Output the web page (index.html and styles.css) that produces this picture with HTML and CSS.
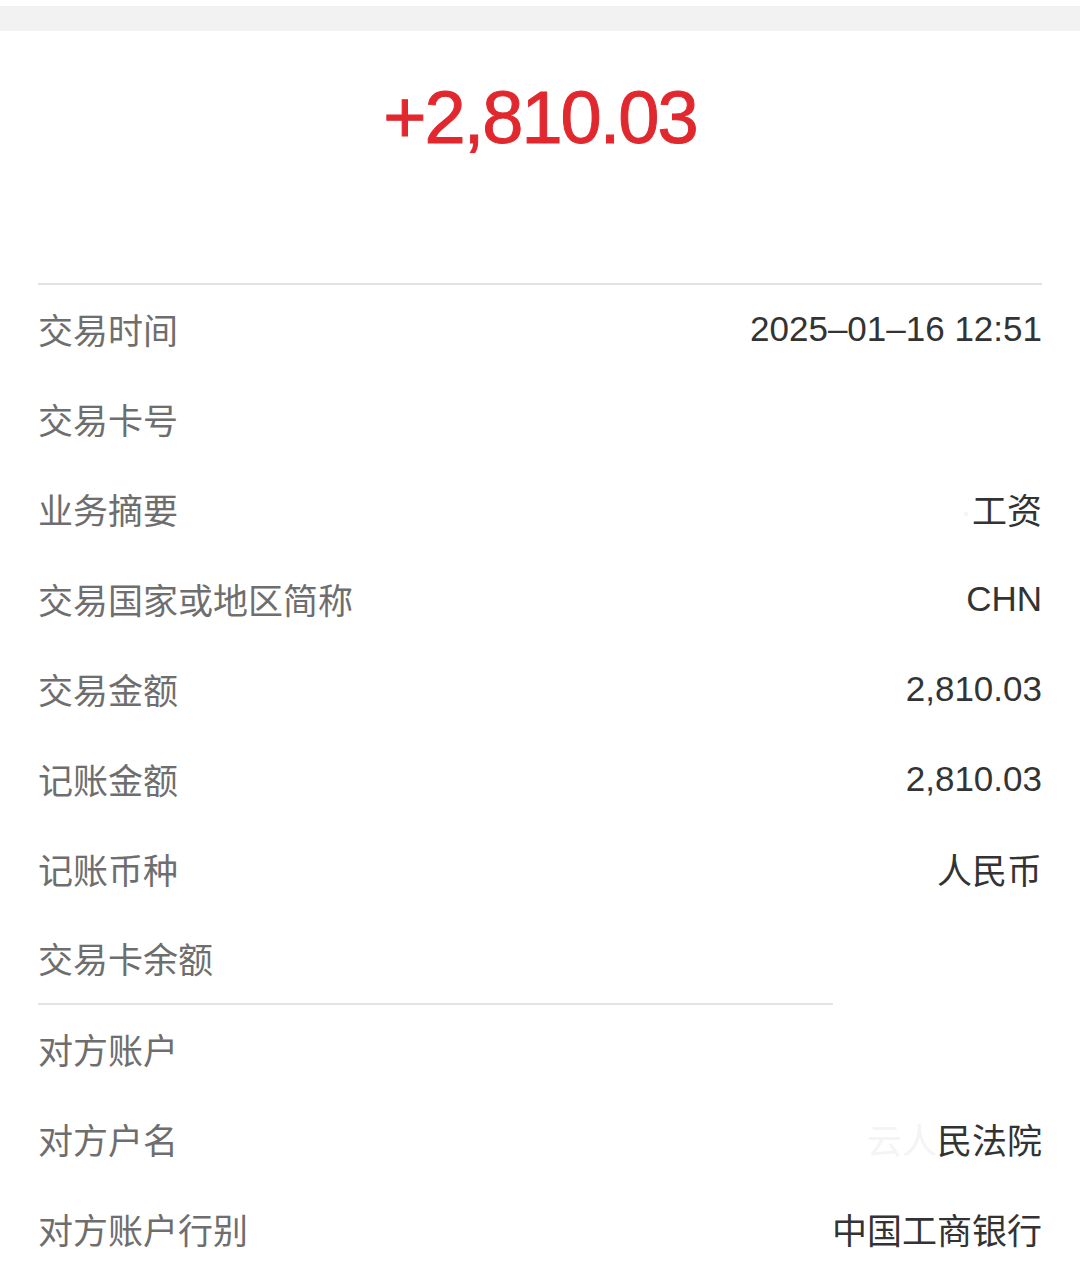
FILE: index.html
```html
<!doctype html>
<html lang="zh-CN">
    <head>
        <meta charset="UTF-8" />
        <meta name="viewport" content="width=device-width, initial-scale=1.0" />
        <title>交易详情</title>
        <link rel="stylesheet" href="styles.css">
    </head>
    <body>
        <div class="topbar"></div>
        <div class="detail">
            <div class="summary">
                <div class="amount">+2,810.03</div>
                <div class="hidden-note">&nbsp;</div>
            </div>
            <div class="list">
                <div class="row">
                    <span class="label">交易时间</span>
                    <span class="value">2025–01–16 12:51</span>
                </div>
                <div class="row">
                    <span class="label">交易卡号</span>
                    <span class="value"></span>
                </div>
                <div class="row">
                    <span class="label">业务摘要</span>
                    <span class="value"><span class="smudge">·</span>工资</span>
                </div>
                <div class="row">
                    <span class="label">交易国家或地区简称</span>
                    <span class="value">CHN</span>
                </div>
                <div class="row">
                    <span class="label">交易金额</span>
                    <span class="value">2,810.03</span>
                </div>
                <div class="row">
                    <span class="label">记账金额</span>
                    <span class="value">2,810.03</span>
                </div>
                <div class="row">
                    <span class="label">记账币种</span>
                    <span class="value">人民币</span>
                </div>
                <div class="row row-last">
                    <span class="label">交易卡余额</span>
                    <span class="value"></span>
                </div>
            </div>
            <div class="divider"></div>
            <div class="list">
                <div class="row">
                    <span class="label">对方账户</span>
                    <span class="value"></span>
                </div>
                <div class="row">
                    <span class="label">对方户名</span>
                    <span class="value"><span class="smudge">云人</span>民法院</span>
                </div>
                <div class="row">
                    <span class="label">对方账户行别</span>
                    <span class="value">中国工商银行</span>
                </div>
            </div>
        </div>
    </body>
</html>
```

FILE: styles.css
```css
body {
    margin: 0;
    background-color: #fff;
    font-family: "Liberation Sans", "Noto Sans CJK SC", sans-serif;
}

.topbar {
    height: 25px;
    margin-top: 6px;
    background-color: #f2f2f2;
}

.detail {
    padding: 0 38px;
}

.summary {
    height: 252px;
    border-bottom: 2px solid #e2e2e2;
    text-align: center;
}

.amount {
    padding-top: 50px;
    font-family: "Liberation Sans", sans-serif;
    font-size: 74px;
    line-height: 1;
    color: #e1282e;
    letter-spacing: -2px;
    -webkit-text-stroke: 1px #e1282e;
}

.hidden-note {
    margin-top: 40px;
    font-size: 24px;
    color: #f7f7f7;
}

.divider {
    height: 2px;
    margin-right: 209px;
    background-color: #e4e4e4;
}

.row {
    box-sizing: border-box;
    display: flex;
    justify-content: space-between;
    align-items: center;
    height: 90px;
    padding-bottom: 3px;
    font-size: 35px;
}

.row-last {
    height: 88px;
}

.label {
    color: #6e6e6e;
}

.value {
    color: #333;
}

.smudge {
    color: #f4f4f4;
}
```
